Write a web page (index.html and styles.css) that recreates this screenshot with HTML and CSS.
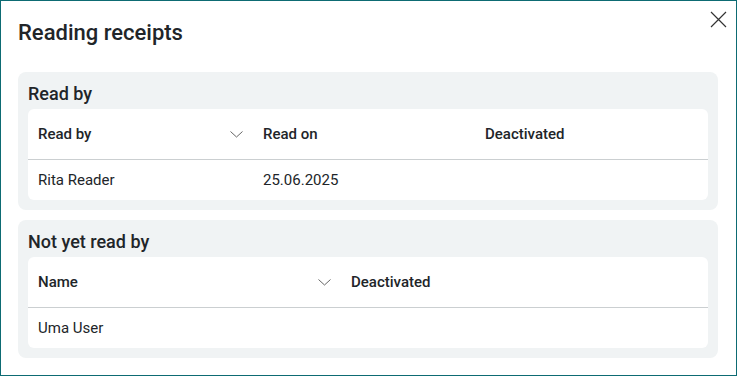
FILE: index.html
```html
<!DOCTYPE html>
<html lang="en">
<head>
    <meta charset="UTF-8">
    <meta name="viewport" content="width=device-width, initial-scale=1.0">
    <title>Reading receipts</title>
    <link rel="stylesheet" href="styles.css">
</head>
<body>
    <div class="dialog">
        <div class="dialog-header">
            <h1>Reading receipts</h1>
            <button class="close-btn" aria-label="Close">
                <svg width="17" height="17" viewBox="0 0 17 17">
                    <path d="M1 1L16 16M16 1L1 16" stroke="#333" stroke-width="1.2" fill="none"/>
                </svg>
            </button>
        </div>

        <section class="receipts-section">
            <h2>Read by</h2>
            <div class="receipts-table">
                <div class="table-head cols-read">
                    <div class="cell head-cell">Read by
                        <svg class="chevron" width="13" height="7" viewBox="0 0 13 7"><path d="M0.5 0.5L6.5 6L12.5 0.5" stroke="#666" stroke-width="1" fill="none"/></svg>
                    </div>
                    <div class="cell head-cell">Read on</div>
                    <div class="cell head-cell">Deactivated</div>
                </div>
                <div class="table-row cols-read">
                    <div class="cell">Rita Reader</div>
                    <div class="cell">25.06.2025</div>
                    <div class="cell"></div>
                </div>
            </div>
        </section>

        <section class="receipts-section">
            <h2>Not yet read by</h2>
            <div class="receipts-table">
                <div class="table-head cols-unread">
                    <div class="cell head-cell">Name
                        <svg class="chevron" width="13" height="7" viewBox="0 0 13 7"><path d="M0.5 0.5L6.5 6L12.5 0.5" stroke="#666" stroke-width="1" fill="none"/></svg>
                    </div>
                    <div class="cell head-cell">Deactivated</div>
                </div>
                <div class="table-row cols-unread">
                    <div class="cell">Uma User</div>
                    <div class="cell"></div>
                </div>
            </div>
        </section>
    </div>
</body>
</html>
```
FILE: styles.css
```css
body {
    margin: 0;
    font-family: Roboto, 'Liberation Sans', sans-serif;
    color: #212529;
    background-color: #fff;
}
.dialog {
    height: 376px;
    box-sizing: border-box;
    border: 1px solid #0d6b73;
    padding: 0 18px 0 17px;
}
.dialog-header {
    display: flex;
    justify-content: space-between;
    align-items: flex-start;
    padding-top: 19px;
    margin-bottom: 26px;
}
h1 {
    margin: 0;
    font-size: 22px;
    line-height: 26px;
    font-weight: 500;
}
.close-btn {
    background: none;
    border: 0;
    padding: 0;
    margin-top: -9px;
    margin-right: -9px;
    width: 17px;
    height: 17px;
    cursor: pointer;
}
.close-btn svg {
    display: block;
}
.receipts-section {
    background-color: #f0f3f4;
    border-radius: 8px;
    padding: 6px 10px 10px;
    margin-bottom: 10px;
}
.receipts-section h2 {
    margin: 0;
    font-size: 18px;
    line-height: 31px;
    font-weight: 500;
}
.receipts-table {
    background-color: #fff;
    border-radius: 6px;
    font-size: 15px;
}
.cols-read {
    display: grid;
    grid-template-columns: 225px 222px 1fr;
}
.cols-unread {
    display: grid;
    grid-template-columns: 313px 1fr;
}
.table-head {
    height: 50px;
    border-bottom: 1px solid #cbcfd1;
}
.table-row {
    height: 40px;
}
.cell {
    display: flex;
    align-items: center;
    padding: 0 10px;
}
.head-cell {
    justify-content: space-between;
    font-weight: 500;
}
.chevron {
    display: block;
}
```
